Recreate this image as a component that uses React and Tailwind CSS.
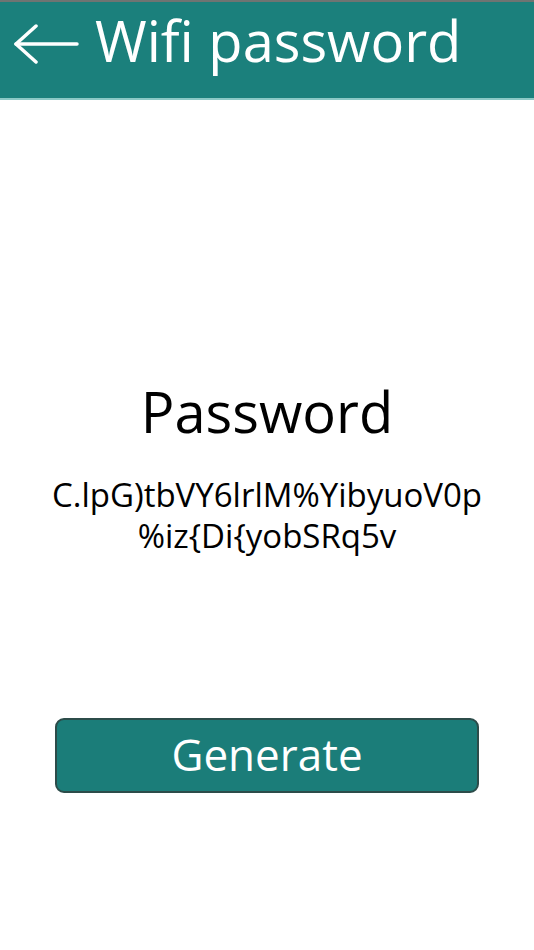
import React, { useState } from 'react';

const chars = 'ABCDEFGHIJKLMNOPQRSTUVWXYZabcdefghijklmnopqrstuvwxyz0123456789%{}().';

const App = () => {
  const [password, setPassword] = useState('C.lpG)tbVY6lrlM%YibyuoV0p%iz{Di{yobSRq5v');

  const generate = () => {
    let out = '';
    for (let i = 0; i < 40; i++) out += chars[Math.floor(Math.random() * chars.length)];
    setPassword(out);
  };

  // el texto se parte en renglones de 25 caracteres
  const lines = [];
  for (let i = 0; i < password.length; i += 25) lines.push(password.slice(i, i + 25));

  return (
    <div className="w-[534px] h-[950px] bg-white flex flex-col" style={{ fontFamily: '"Open Sans", "Noto Sans", sans-serif' }}>
      {/* barra superior */}
      <div className="h-[2px] bg-[#6f7472]"></div>
      <header className="h-[96px] bg-[#1b807c] flex items-start pt-[10px] pl-[13px] gap-[16px]">
        <svg className="mt-[12px] shrink-0" width="66" height="40" viewBox="0 0 66 40" fill="none" stroke="white" strokeWidth="3.5" strokeLinecap="round" strokeLinejoin="round">
          <path d="M64 20H3" />
          <path d="M23 2L3 20L23 38" />
        </svg>
        <h1 className="text-white text-[56px] leading-none">Wifi password</h1>
      </header>
      <div className="h-[2px] bg-[#8cc9c6]"></div>

      <main className="flex-1 flex flex-col items-center">
        <h2 className="mt-[283px] text-[56px] leading-none text-black">Password</h2>
        <div className="mt-[35px] text-center text-[33px] leading-[41px] text-black">
          {lines.map((l, i) => (
            <p key={i}>{l}</p>
          ))}
        </div>
        <button
          onClick={generate}
          className="mt-[162px] w-[424px] h-[75px] rounded-[9px] bg-[#1b7d79] border-2 border-[#2c4c4a] text-white text-[44px] leading-none pb-[4px]"
        >
          Generate
        </button>
      </main>
    </div>
  );
};

export default App;
